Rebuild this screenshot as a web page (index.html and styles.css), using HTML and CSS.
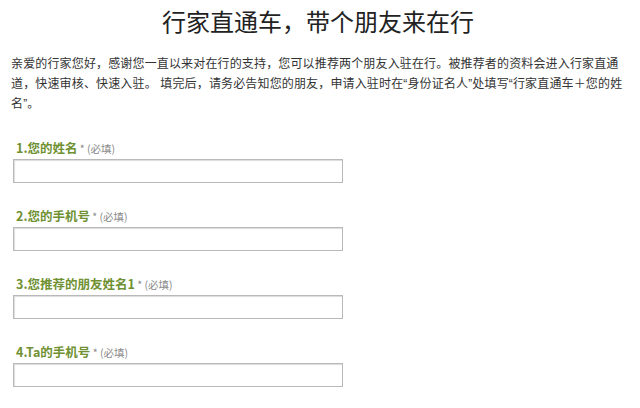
FILE: index.html
```html
<!DOCTYPE html>
<html lang="zh-CN">
<head>
<meta charset="utf-8">
<link rel="stylesheet" href="styles.css">
</head>
<body>
<div class="page">
  <h1 class="title">行家直通车，带个朋友来在行</h1>
  <p class="intro">亲爱的行家您好，感谢您一直以来对在行的支持，您可以推荐两个朋友入驻在行。被推荐者的资料会进入行家直通<br>道，快速审核、快速入驻。 填完后，请务必告知您的朋友，申请入驻时在“身份证名人”处填写“行家直通车＋您的姓<br>名”。</p>
  <form class="form">
    <div class="field">
      <label class="label"><span class="q">1.您的姓名</span><span class="req"> * (必填)</span></label>
      <input class="input" type="text">
    </div>
    <div class="field">
      <label class="label"><span class="q">2.您的手机号</span><span class="req"> * (必填)</span></label>
      <input class="input" type="text">
    </div>
    <div class="field">
      <label class="label"><span class="q">3.您推荐的朋友姓名1</span><span class="req"> * (必填)</span></label>
      <input class="input" type="text">
    </div>
    <div class="field">
      <label class="label"><span class="q">4.Ta的手机号</span><span class="req"> * (必填)</span></label>
      <input class="input" type="text">
    </div>
  </form>
</div>
</body>
</html>
```

FILE: styles.css
```css
html, body {
  margin: 0;
  padding: 0;
  background: #ffffff;
}
body {
  font-family: "Noto Sans CJK SC", "Liberation Sans", sans-serif;
  color: #333333;
}
.page {
  width: 640px;
  padding-top: 6px;
}
.title {
  margin: 0;
  text-align: center;
  font-size: 24px;
  line-height: 30px;
  font-weight: normal;
  color: #222222;
  padding-right: 4px;
}
.intro {
  margin: 18px 0 0 0;
  padding-left: 11px;
  font-family: "Liberation Sans", "Noto Sans CJK SC", sans-serif;
  font-size: 12px;
  line-height: 20px;
  letter-spacing: 0.15px;
  color: #333333;
  white-space: nowrap;
}
.form {
  margin-top: 24px;
  display: flex;
  flex-direction: column;
  gap: 23px;
}
.field {
  display: flex;
  flex-direction: column;
  gap: 5px;
}
.label {
  padding-left: 16px;
  line-height: 16px;
  height: 16px;
}
.q {
  font-size: 12.5px;
  font-weight: bold;
  color: #6f9132;
}
.req {
  font-size: 10.5px;
  color: #8a8a8a;
}
.input {
  margin: 0 0 0 13px;
  width: 330px;
  height: 24px;
  box-sizing: border-box;
  border: 1px solid #b9b9b9;
  box-shadow: inset 1px 1px 1px #dcdcdc;
  background: #ffffff;
  padding: 0;
}
```
